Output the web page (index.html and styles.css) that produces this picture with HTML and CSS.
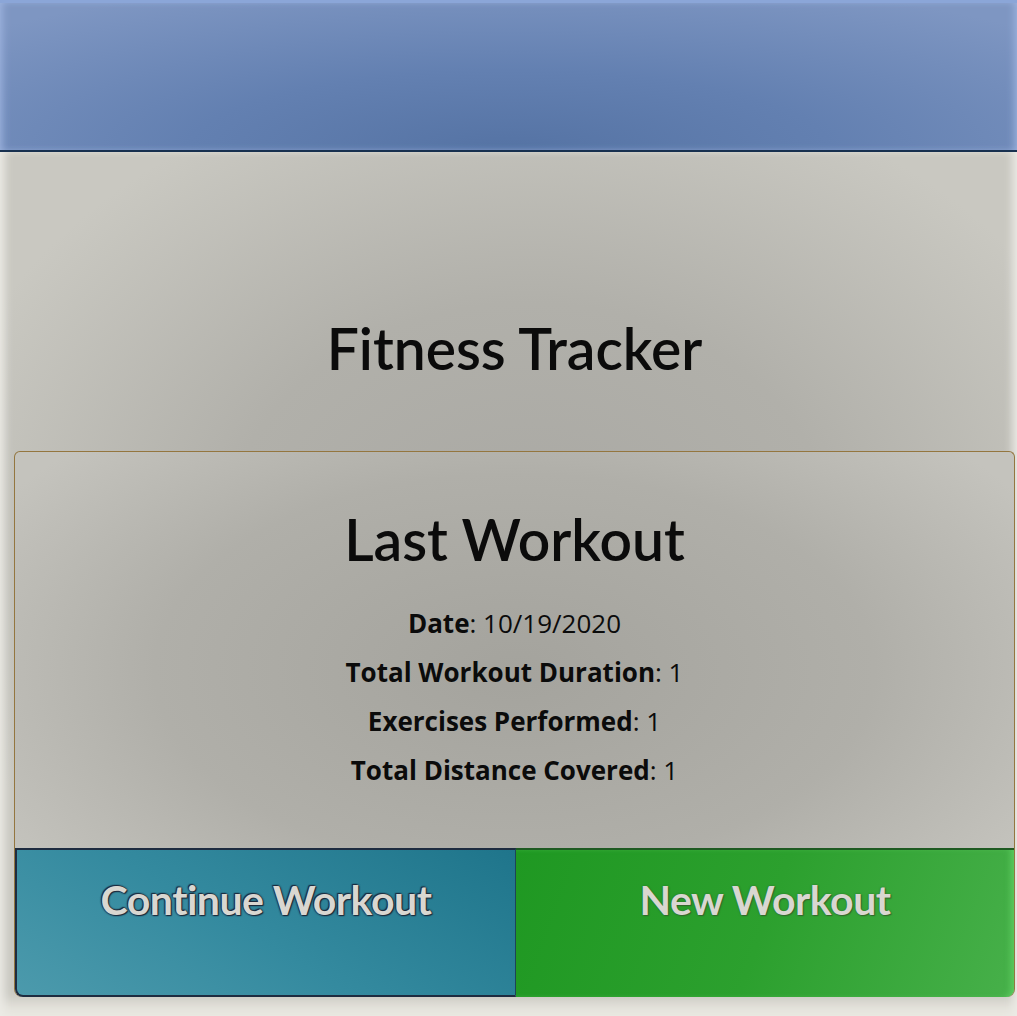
FILE: index.html
```html
<!DOCTYPE html>
<html lang="en">
<head>
<meta charset="utf-8">
<title>Fitness Tracker</title>
<link rel="stylesheet" href="styles.css">
</head>
<body>
<header class="topbar"></header>
<main class="page">
  <h1 class="title">Fitness Tracker</h1>
  <section class="card">
    <div class="card-body">
      <h2 class="card-title">Last Workout</h2>
      <p class="stat"><strong>Date</strong>: 10/19/2020</p>
      <p class="stat"><strong>Total Workout Duration</strong>: 1</p>
      <p class="stat"><strong>Exercises Performed</strong>: 1</p>
      <p class="stat"><strong>Total Distance Covered</strong>: 1</p>
    </div>
    <div class="actions">
      <a class="btn btn-continue" href="#">Continue Workout</a>
      <a class="btn btn-new" href="#">New Workout</a>
    </div>
  </section>
</main>
</body>
</html>
```

FILE: styles.css
```css
* { box-sizing: border-box; }
html, body { margin: 0; padding: 0; }
body {
  width: 1017px;
  height: 1016px;
  overflow: hidden;
  font-family: Lato, "Open Sans", sans-serif;
  color: #0b0b0b;
  background: #e9e7e0;
}
.topbar {
  height: 152px;
  background: radial-gradient(ellipse 70% 120% at 50% 100%, #5573a4 0%, #6380b1 45%, #7e96c2 100%);
  border-top: 3px solid #8ba6d8;
  border-bottom: 2px solid #17304f;
  box-shadow: inset 6px 0 8px -4px #9fb5e0, inset -6px 0 8px -4px #9fb5e0;
}
.page {
  height: 864px;
  padding: 0 2px 0 14px;
  background: radial-gradient(ellipse 60% 55% at 52% 45%, #a9a8a3 0%, #b1b0aa 50%, #c9c8c1 100%);
  box-shadow: inset 8px 0 10px -4px #ecebe6, inset -8px 0 10px -4px #ecebe6, inset 0 -20px 14px -6px #e9e7e0;
}
.title {
  margin: 0;
  padding: 166px 0 0;
  height: 299px;
  text-align: center;
  font-size: 57px;
  font-weight: 600;
  line-height: 60px;
}
.card {
  border: 1px solid #94763f;
  border-bottom: none;
  border-radius: 6px 6px 8px 8px;
  background: radial-gradient(ellipse 60% 60% at 50% 40%, #a4a39d 0%, #b0afa9 60%, #c4c3bd 100%);
}
.card-body {
  height: 396px;
  padding-top: 57px;
  text-align: center;
}
.card-title {
  margin: 0 0 30px;
  font-size: 57px;
  font-weight: 600;
  line-height: 60px;
}
.stat {
  margin: 0;
  font-family: "Open Sans", Lato, sans-serif;
  font-size: 26px;
  line-height: 49px;
}
.stat strong { font-weight: 700; }
.actions {
  display: flex;
  height: 149px;
}
.btn {
  flex: 1;
  display: block;
  text-decoration: none;
  text-align: center;
  padding-top: 26px;
  font-size: 41px;
  font-weight: 700;
  line-height: 48px;
  letter-spacing: -0.5px;
  color: #d9d7d1;
}
.btn-continue {
  background: linear-gradient(30deg, #4c9aac 0%, #348a9f 45%, #1f758b 100%);
  border: 2px solid #1e2c40;
  border-right: 1px solid #1e4458;
  border-radius: 0 0 0 8px;
  text-shadow: 0 0 2px #1d2a3c, 0 0 2px #1d2a3c, 1px 1px 1px #1d2a3c, -1px -1px 1px #1d2a3c;
}
.btn-new {
  background: linear-gradient(110deg, #1f9822 0%, #2ca02e 50%, #47b04a 100%);
  border-top: 2px solid #1e5a22;
  border-radius: 0 0 8px 0;
  text-shadow: 0 0 2px #2a6a2a, 1px 1px 1px #38652e;
  box-shadow: inset -6px 0 6px -3px #5dcc60;
}
```
